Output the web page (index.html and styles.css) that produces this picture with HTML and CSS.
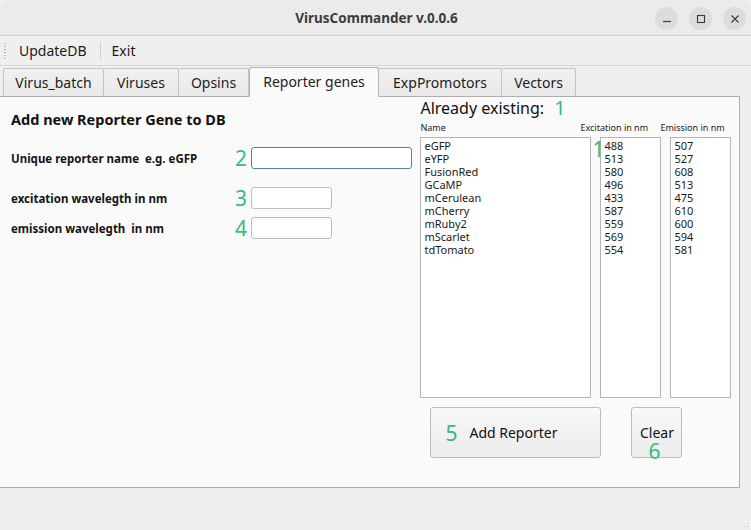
FILE: index.html
```html
<!DOCTYPE html>
<html>
<head>
<meta charset="utf-8">
<link rel="stylesheet" href="styles.css">
</head>
<body>
<div class="window">
  <div class="titlebar">
    <div class="title">VirusCommander v.0.0.6</div>
    <div class="wbtns">
      <span class="wbtn"><svg width="10" height="10" viewBox="0 0 10 10"><path d="M1 7.5h8" stroke="#3a3a3a" stroke-width="1.2"/></svg></span>
      <span class="wbtn"><svg width="10" height="10" viewBox="0 0 10 10"><rect x="1.5" y="1.5" width="7" height="7" fill="none" stroke="#3a3a3a" stroke-width="1.1"/></svg></span>
      <span class="wbtn"><svg width="10" height="10" viewBox="0 0 10 10"><path d="M1.5 1.5l7 7M8.5 1.5l-7 7" stroke="#3a3a3a" stroke-width="1.1"/></svg></span>
    </div>
  </div>
  <div class="menubar">
    <span class="grip"></span>
    <span class="menuitem first">UpdateDB</span>
    <span class="msep"></span>
    <span class="menuitem">Exit</span>
  </div>
  <div class="tabs">
    <span class="tab t1">Virus_batch</span>
    <span class="tab t2">Viruses</span>
    <span class="tab t3">Opsins</span>
    <span class="tab sel">Reporter genes</span>
    <span class="tab t5">ExpPromotors</span>
    <span class="tab t6">Vectors</span>
  </div>
  <div class="pane">
    <div class="left">
      <div class="heading">Add new Reporter Gene to DB</div>
      <div class="form">
        <div class="row r1"><span class="lbl">Unique reporter name&nbsp; e.g. eGFP</span><span class="num">2</span><span class="input wide focus"></span></div>
        <div class="row r2"><span class="lbl">excitation wavelegth in nm</span><span class="num">3</span><span class="input"></span></div>
        <div class="row r3"><span class="lbl">emission wavelegth&nbsp; in nm</span><span class="num">4</span><span class="input"></span></div>
      </div>
    </div>
    <div class="right">
      <div class="exhead">Already existing: <span class="num big">1</span></div>
      <div class="colheads">
        <span class="ch ch1">Name</span>
        <span class="ch ch2">Excitation in nm</span>
        <span class="ch ch3">Emission in nm</span>
      </div>
      <div class="lists">
        <div class="list lname">
          <div>eGFP</div><div>eYFP</div><div>FusionRed</div><div>GCaMP</div><div>mCerulean</div><div>mCherry</div><div>mRuby2</div><div>mScarlet</div><div>tdTomato</div>
        </div>
        <div class="list lnum">
          <div>488</div><div>513</div><div>580</div><div>496</div><div>433</div><div>587</div><div>559</div><div>569</div><div>554</div>
        </div>
        <div class="list lnum">
          <div>507</div><div>527</div><div>608</div><div>513</div><div>475</div><div>610</div><div>600</div><div>594</div><div>581</div>
        </div>
        <span class="num ov1">1</span>
      </div>
      <div class="btnrow">
        <div class="btn badd"><span class="num n5">5</span><span>Add Reporter</span></div>
        <div class="btn bclear"><span>Clear</span><span class="num n6">6</span></div>
      </div>
    </div>
  </div>
  <div class="status"><span class="sgrip"></span></div>
</div>
</body>
</html>
```

FILE: styles.css
```css
* { box-sizing: border-box; }
html, body { margin: 0; padding: 0; }
body {
  width: 751px;
  height: 530px;
  overflow: hidden;
  font-family: "Noto Sans", "Open Sans", sans-serif;
  color: #1a1a1a;
  background: #efefef;
}
.window { width: 751px; height: 530px; display: flex; flex-direction: column; }

.titlebar {
  height: 36px;
  background: #ebebeb;
  border-bottom: 1px solid #d0d0d0;
  position: relative;
  display: flex;
  align-items: center;
  justify-content: center;
  border-radius: 10px 10px 0 0;
}
.title {
  font-weight: bold;
  font-size: 13.5px;
  color: #3d3d3d;
  margin-left: 2px;
}
.wbtns {
  position: absolute;
  right: 5px;
  top: 7px;
  display: flex;
  gap: 11px;
}
.wbtn {
  width: 23px; height: 23px;
  border-radius: 50%;
  background: #dcdcdc;
  display: flex; align-items: center; justify-content: center;
}

.menubar {
  height: 30px;
  background: #efefef;
  border-bottom: 1px solid #d6d6d6;
  display: flex;
  align-items: center;
  font-size: 14px;
  color: #1c1c1c;
}
.grip {
  width: 2px; height: 18px;
  margin-left: 4px;
  background-image: radial-gradient(circle, #b8b8b8 0.8px, transparent 1px);
  background-size: 2px 3px;
}
.menuitem { padding: 0 9px 0 11px; }
.menuitem.first { margin-left: 3px; padding-left: 10px; padding-right: 13px; }
.msep { width: 1px; height: 18px; background: #d2d2d2; }

.tabs {
  display: flex;
  padding-left: 3px;
  height: 30px;
  align-items: flex-end;
  font-size: 14px;
  position: relative;
  z-index: 2;
}
.tab {
  height: 28px;
  border: 1px solid #c4c4c4;
  border-bottom: none;
  border-left: none;
  background: linear-gradient(#f0f0f0, #e9e9e9);
  display: flex;
  align-items: center;
  justify-content: center;
  color: #1c1c1c;
  border-radius: 2px 2px 0 0;
}
.t1 { width: 101px; border-left: 1px solid #c4c4c4; }
.t2 { width: 75px; }
.t3 { width: 70px; }
.sel {
  width: 130px;
  height: 30px;
  background: #fafafa;
  border: 1px solid #b4b4b4;
  border-bottom: 1px solid #fafafa;
  margin-bottom: -1px;
  border-radius: 3px 3px 0 0;
  padding-bottom: 2px;
}
.t5 { width: 123px; border-left: none; }
.t6 { width: 74px; }

.pane {
  width: 740px;
  height: 392px;
  background: #fafafa;
  border: 1px solid #b0b0b0;
  border-left: none;
  display: flex;
  position: relative;
  z-index: 1;
}
.left { width: 421px; padding-left: 11px; }
.heading {
  font-weight: bold;
  font-size: 14.5px;
  margin-top: 12px;
  line-height: 20px;
  color: #111;
}
.form { margin-top: 18px; }
.row {
  display: flex;
  align-items: center;
  height: 22px;
}
.r2 { margin-top: 18px; }
.r3 { margin-top: 8px; }
.lbl {
  width: 224px;
  font-weight: bold;
  font-size: 11.5px;
  color: #151515;
}
.num {
  color: #3ab981;
  font-size: 21px;
  line-height: 20px;
}
.row .num { width: 16px; text-align: left; }
.input {
  width: 81px;
  height: 22px;
  background: #fff;
  border: 1px solid #bdbdbd;
  border-radius: 3px;
}
.input.wide { width: 161px; }
.input.focus { border-color: #4e80b8; }

.right { width: 319px; position: relative; }
.exhead {
  font-size: 16px;
  line-height: 22px;
  color: #111;
  display: flex;
  align-items: center;
}
.exhead .num { margin-left: 10px; font-size: 20px; }
.colheads {
  display: flex;
  font-size: 9px;
  line-height: 12px;
  margin-top: 3px;
  color: #222;
}
.ch1 { width: 160px; }
.ch2 { width: 80px; }
.lists {
  display: flex;
  gap: 9px;
  margin-top: 3px;
  position: relative;
}
.list {
  height: 261px;
  background: #fff;
  border: 1px solid #b5b5b5;
  font-size: 11px;
  line-height: 13px;
  padding-top: 1px;
  color: #1a1a1a;
}
.lname { width: 171px; padding-left: 3px; }
.lnum { width: 61px; padding-left: 3px; }
.ov1 {
  position: absolute;
  left: 172px;
  top: 2px;
}
.btnrow {
  display: flex;
  gap: 30px;
  margin-top: 9px;
  margin-left: 10px;
}
.btn {
  height: 51px;
  border: 1px solid #bcbcbc;
  border-radius: 3px;
  background: linear-gradient(#f8f8f8, #ececec);
  display: flex;
  align-items: center;
  font-size: 14px;
  color: #111;
  position: relative;
}
.badd { width: 171px; padding-left: 14px; }
.badd .n5 { margin-right: 12px; font-size: 21px; }
.bclear { width: 51px; justify-content: center; }
.n6 {
  position: absolute;
  left: 16px;
  top: 33px;
}
.status { flex: 1; position: relative; }
.sgrip {
  position: absolute;
  right: 1px; bottom: 1px;
  width: 10px; height: 10px;
  background-image: radial-gradient(circle, #c4c4c4 0.8px, transparent 1px);
  background-size: 3px 3px;
  clip-path: polygon(100% 0, 100% 100%, 0 100%);
}
```
